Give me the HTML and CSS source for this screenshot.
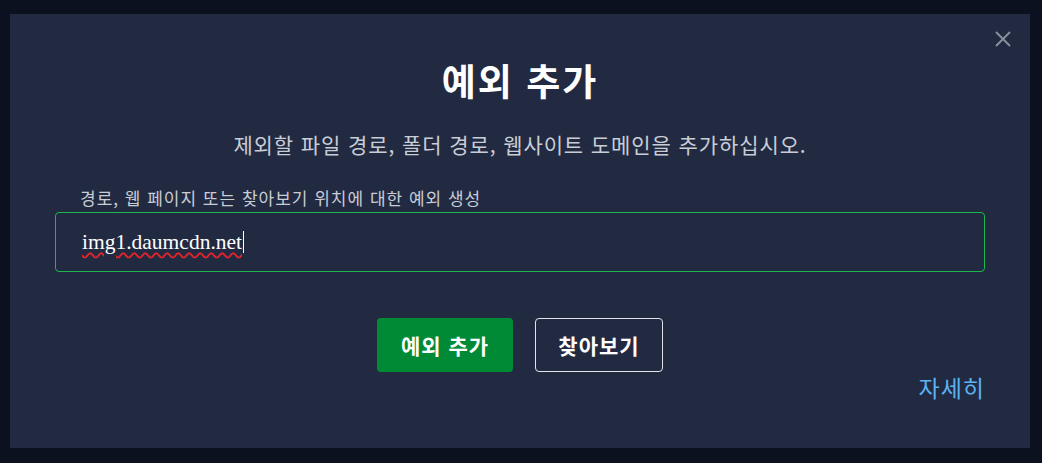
FILE: index.html
```html
<!DOCTYPE html>
<html lang="ko">
<head>
<meta charset="utf-8">
<title>예외 추가</title>
<link rel="stylesheet" href="styles.css">
</head>
<body>
<div class="backdrop">
  <div class="dialog">
    <button class="close" aria-label="닫기">
      <svg width="16" height="16" viewBox="0 0 16 16"><path d="M1 1L15 15M15 1L1 15" stroke="#8b909d" stroke-width="1.8" fill="none"/></svg>
    </button>
    <h1 class="title">예외 추가</h1>
    <p class="subtitle">제외할 파일 경로, 폴더 경로, 웹사이트 도메인을 추가하십시오.</p>
    <label class="label">경로, 웹 페이지 또는 찾아보기 위치에 대한 예외 생성</label>
    <div class="field"><span class="value">img1.daumcdn.net</span><span class="caret"></span></div>
    <div class="actions">
      <button class="btn primary">예외 추가</button>
      <button class="btn secondary">찾아보기</button>
    </div>
    <div class="more"><a class="link" href="#">자세히</a></div>
  </div>
</div>
</body>
</html>
```
FILE: styles.css
```css
* { box-sizing: border-box; }
html, body { margin: 0; height: 100%; }
body {
  background: #0c1120;
  font-family: "Noto Sans CJK KR", "Noto Sans", sans-serif;
}
.backdrop {
  padding: 14px 12px 15px 10px;
}
.dialog {
  position: relative;
  width: 1020px;
  height: 434px;
  background: #222a42;
  display: flex;
  flex-direction: column;
  padding: 0 45px;
}
.close {
  position: absolute;
  top: 17px;
  right: 19px;
  background: none;
  border: 0;
  padding: 0;
  width: 16px;
  height: 16px;
  display: flex;
}
.title {
  margin: 40px 0 0;
  text-align: center;
  font-size: 37px;
  letter-spacing: 2px;
  line-height: 52px;
  font-weight: 700;
  color: #ffffff;
}
.subtitle {
  margin: 24px 0 0;
  text-align: center;
  font-size: 21px;
  letter-spacing: 0.9px;
  line-height: 28px;
  color: #c9cdd6;
}
.label {
  margin: 28px 0 0 25px;
  font-size: 17px;
  letter-spacing: 1px;
  line-height: 24px;
  color: #c9cdd6;
}
.field {
  margin-top: 2px;
  height: 60px;
  border: 1px solid #1cb84c;
  border-radius: 4px;
  display: flex;
  align-items: center;
  padding: 0 0 0 26px;
  font-family: "Liberation Serif", "DejaVu Serif", serif;
  font-size: 21.5px;
  color: #ffffff;
}
.value {
  text-decoration: underline wavy #e0242a;
  text-decoration-thickness: 1.5px;
  text-underline-offset: 3px;
}
.caret {
  width: 1px;
  height: 22px;
  background: #ffffff;
  margin-left: 1px;
}
.actions {
  margin-top: 46px;
  display: flex;
  justify-content: center;
  gap: 22px;
}
.btn {
  height: 54px;
  border-radius: 4px;
  font-family: "Noto Sans CJK KR", "Noto Sans", sans-serif;
  font-size: 21px;
  letter-spacing: 1px;
  font-weight: 700;
  color: #ffffff;
  padding: 0;
}
.primary {
  background: #008a36;
  border: 0;
  width: 136px;
}
.secondary {
  background: transparent;
  border: 1px solid #e2e4ea;
  width: 128px;
}
.more {
  margin-top: 0;
  display: flex;
  justify-content: flex-end;
}
.link {
  font-size: 23px;
  letter-spacing: 1px;
  line-height: 30px;
  color: #5cb3f2;
  text-decoration: none;
}
```
